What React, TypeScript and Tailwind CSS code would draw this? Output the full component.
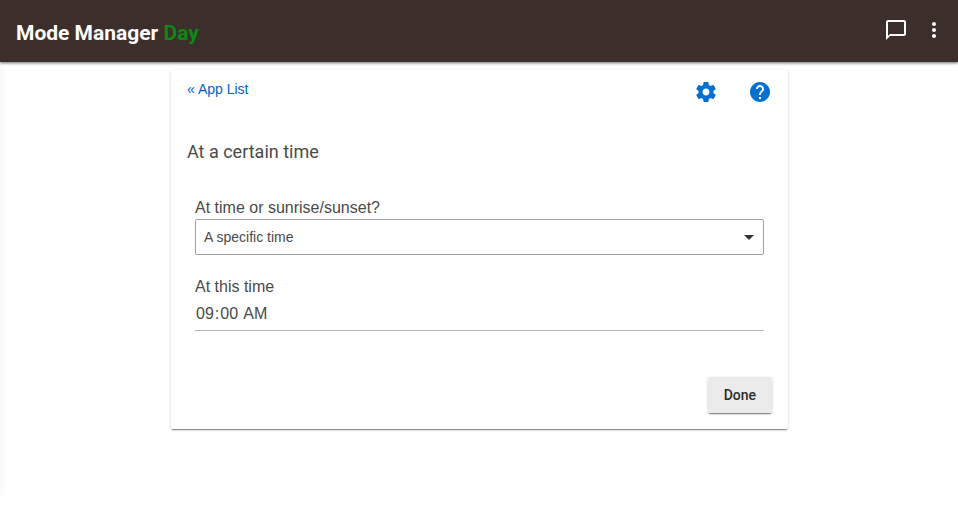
import { useState } from "react";

function Header() {
  return (
    <header className="relative z-10 flex h-[62px] items-center justify-between bg-[#3c2e2b] pr-3 pb-0.5 pl-4 shadow-[0_1px_3px_rgba(0,0,0,0.6)]">
      <h1 className="pt-1.5 font-['Roboto',sans-serif] text-[21px] leading-7 font-bold text-white">
        Mode Manager <span className="text-[#088a14]">Day</span>
      </h1>
      <div className="flex items-center gap-[14px]">
        <button type="button" aria-label="Messages" className="text-white">
          <svg viewBox="0 0 24 24" className="size-6" fill="currentColor">
            <path d="M20 2H4c-1.100 0-2 .9-2 2v18l4-4h14c1.100 0 2-.9 2-2V4c0-1.100-.9-2-2-2zm0 14H6l-2 2V4h16v12z" />
          </svg>
        </button>
        <button type="button" aria-label="More options" className="text-white">
          <svg viewBox="0 0 24 24" className="size-6" fill="currentColor">
            <path d="M12 8c1.100 0 2-.9 2-2s-.9-2-2-2-2 .9-2 2 .9 2 2 2zm0 2c-1.100 0-2 .9-2 2s.9 2 2 2 2-.9 2-2-.9-2-2-2zm0 6c-1.100 0-2 .9-2 2s.9 2 2 2 2-.9 2-2-.9-2-2-2z" />
          </svg>
        </button>
      </div>
    </header>
  );
}

function CardActions() {
  return (
    <div className="flex gap-[30px] text-[#0070d2]">
      <button type="button" aria-label="Settings">
        <svg viewBox="0 0 24 24" className="size-6" fill="currentColor">
          <path d="M19.430 12.980c.04-.32.070-.64.070-.98s-.03-.66-.07-.98l2.110-1.650c.19-.15.240-.42.120-.64l-2-3.460c-.12-.22-.39-.3-.61-.22l-2.490 1c-.52-.4-1.080-.73-1.690-.98l-.38-2.650C14.460 2.180 14.250 2 14 2h-4c-.25 0-.46.180-.49.420l-.38 2.650c-.61.250-1.170.590-1.690.98l-2.490-1c-.23-.09-.49 0-.61.220l-2 3.460c-.13.220-.07.490.120.640l2.110 1.650c-.04.320-.07.650-.07.980s.03.660.070.980l-2.110 1.650c-.19.150-.24.420-.12.640l2 3.460c.12.220.390.300.610.220l2.490-1c.52.400 1.080.730 1.690.980l.38 2.650c.03.240.240.420.490.420h4c.25 0 .46-.18.490-.42l.38-2.650c.61-.25 1.170-.59 1.690-.98l2.490 1c.23.090.490 0 .610-.22l2-3.460c.12-.22.070-.49-.12-.64l-2.110-1.650zM12 15.500c-1.930 0-3.500-1.570-3.500-3.500s1.570-3.500 3.500-3.500 3.500 1.570 3.500 3.500-1.570 3.500-3.500 3.500z" />
        </svg>
      </button>
      <button type="button" aria-label="Help">
        <svg viewBox="0 0 24 24" className="size-6" fill="currentColor">
          <path d="M12 2C6.480 2 2 6.480 2 12s4.480 10 10 10 10-4.480 10-10S17.520 2 12 2zm1 17h-2v-2h2v2zm2.070-7.750l-.9.920C13.450 12.900 13 13.500 13 15h-2v-.5c0-1.100.450-2.100 1.170-2.830l1.240-1.260c.37-.36.590-.86.590-1.410 0-1.100-.9-2-2-2s-2 .9-2 2H8c0-2.210 1.790-4 4-4s4 1.790 4 4c0 .88-.36 1.680-.93 2.250z" />
        </svg>
      </button>
    </div>
  );
}

export default function App() {
  const [trigger, setTrigger] = useState("specific");
  const [time, setTime] = useState("09:00");

  return (
    <div className="min-h-screen bg-white font-['Liberation_Sans',Arial,sans-serif] text-[#4a4a4a]">
      <Header />
      <div className="flex">
        <aside className="mr-px -ml-px h-[434px] w-px shadow-[0_0_6px_rgba(0,0,0,0.2)]" />
        <main className="flex-1 py-2">
          <form
            className="mx-auto flex w-full max-w-[617px] flex-col rounded-xs bg-white p-4 pt-[10px] shadow-[0_2px_1px_-1px_rgba(0,0,0,0.4),0_1px_3px_rgba(0,0,0,0.22)]"
            onSubmit={(e) => e.preventDefault()}
          >
            <div className="flex items-start justify-between">
              <a href="#apps" className="text-sm leading-[18px] text-[#0063c6]">
                « App List
              </a>
              <CardActions />
            </div>
            <h2 className="mt-9 font-['Roboto',sans-serif] text-lg leading-6">
              At a certain time
            </h2>
            <div className="mt-[33px] flex flex-col px-2">
              <label htmlFor="trigger" className="text-base leading-[22px]">
                At time or sunrise/sunset?
              </label>
              <div className="relative">
                <select
                  id="trigger"
                  value={trigger}
                  onChange={(e) => setTrigger(e.target.value)}
                  className="block h-9 w-full appearance-none rounded-xs border border-[#a0a0a0] bg-white pr-8 pl-2 text-sm"
                >
                  <option value="specific">A specific time</option>
                  <option value="sunrise">Sunrise</option>
                  <option value="sunset">Sunset</option>
                </select>
                <svg
                  viewBox="0 0 10 5"
                  className="pointer-events-none absolute top-4 right-[10px] h-[5px] w-[10px]"
                  fill="#333333"
                >
                  <path d="M0 0h10L5 5z" />
                </svg>
              </div>
              <label htmlFor="time" className="mt-[21px] text-base leading-[22px]">
                At this time
              </label>
              <input
                id="time"
                type="time"
                value={time}
                onChange={(e) => setTime(e.target.value)}
                className="h-[33px] w-full border-b border-[#b5b5b5] text-base outline-none [&::-webkit-calendar-picker-indicator]:hidden"
              />
            </div>
            <button
              type="submit"
              className="mt-[46px] h-9 self-end rounded-xs bg-[#ebebeb] px-4 font-['Roboto',sans-serif] text-sm font-medium text-[#2b2b2b] shadow-[0_2px_1px_-1px_rgba(0,0,0,0.4),0_1px_3px_rgba(0,0,0,0.22)]"
            >
              Done
            </button>
          </form>
        </main>
      </div>
    </div>
  );
}
